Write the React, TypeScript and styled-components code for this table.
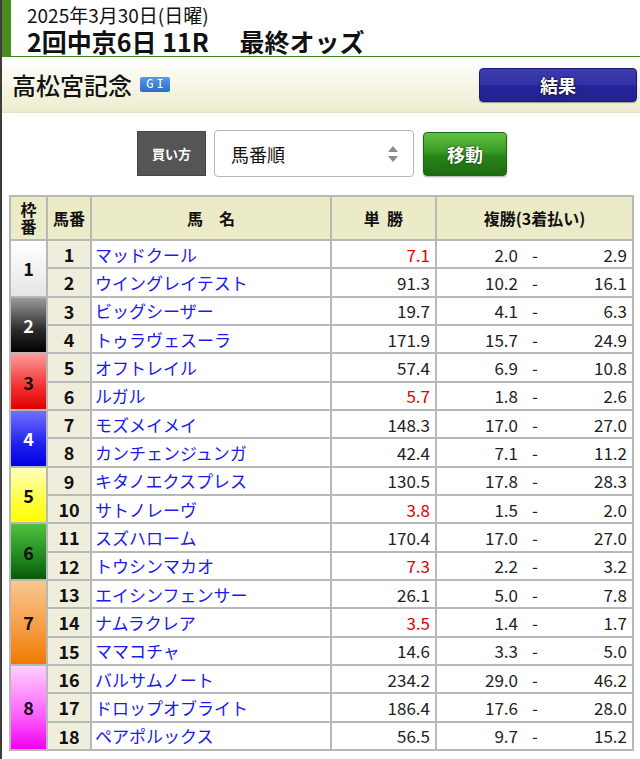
import React from 'react'
import styled, { createGlobalStyle } from 'styled-components'

const GlobalStyle = createGlobalStyle`
  body {
    margin: 0;
    background: #fff;
    font-family: 'Noto Sans CJK JP', 'Noto Sans', sans-serif;
    color: #111;
  }
`

type Horse = { no: number; name: string; win: string; low: string; high: string; fav?: boolean }

const FRAMES: { bg: string; color: string }[] = [
  { bg: 'linear-gradient(#ffffff, #e6e6e6)', color: '#111' },
  { bg: 'linear-gradient(#9a9a9a, #2a2a2a 60%, #000)', color: '#fff' },
  { bg: 'linear-gradient(#ff9a9a, #f03030 60%, #e00000)', color: '#111' },
  { bg: 'linear-gradient(#7070ff, #2020f0 60%, #0000e0)', color: '#fff' },
  { bg: 'linear-gradient(#ffffc0, #ffff40 60%, #ffff00)', color: '#111' },
  { bg: 'linear-gradient(#50c040, #1e8a1e 60%, #0b5a0b)', color: '#111' },
  { bg: 'linear-gradient(#f9c890, #f59a40 60%, #f07a00)', color: '#111' },
  { bg: 'linear-gradient(#ffd0ff, #ff60ff 60%, #f000f0)', color: '#111' },
]

const horses: Horse[] = [
  { no: 1, name: 'マッドクール', win: '7.1', low: '2.0', high: '2.9', fav: true },
  { no: 2, name: 'ウイングレイテスト', win: '91.3', low: '10.2', high: '16.1' },
  { no: 3, name: 'ビッグシーザー', win: '19.7', low: '4.1', high: '6.3' },
  { no: 4, name: 'トゥラヴェスーラ', win: '171.9', low: '15.7', high: '24.9' },
  { no: 5, name: 'オフトレイル', win: '57.4', low: '6.9', high: '10.8' },
  { no: 6, name: 'ルガル', win: '5.7', low: '1.8', high: '2.6', fav: true },
  { no: 7, name: 'モズメイメイ', win: '148.3', low: '17.0', high: '27.0' },
  { no: 8, name: 'カンチェンジュンガ', win: '42.4', low: '7.1', high: '11.2' },
  { no: 9, name: 'キタノエクスプレス', win: '130.5', low: '17.8', high: '28.3' },
  { no: 10, name: 'サトノレーヴ', win: '3.8', low: '1.5', high: '2.0', fav: true },
  { no: 11, name: 'スズハローム', win: '170.4', low: '17.0', high: '27.0' },
  { no: 12, name: 'トウシンマカオ', win: '7.3', low: '2.2', high: '3.2', fav: true },
  { no: 13, name: 'エイシンフェンサー', win: '26.1', low: '5.0', high: '7.8' },
  { no: 14, name: 'ナムラクレア', win: '3.5', low: '1.4', high: '1.7', fav: true },
  { no: 15, name: 'ママコチャ', win: '14.6', low: '3.3', high: '5.0' },
  { no: 16, name: 'バルサムノート', win: '234.2', low: '29.0', high: '46.2' },
  { no: 17, name: 'ドロップオブライト', win: '186.4', low: '17.6', high: '28.0' },
  { no: 18, name: 'ペアポルックス', win: '56.5', low: '9.7', high: '15.2' },
]

// 枠ごとの頭数 (18頭立て)
const frameSizes = [2, 2, 2, 2, 2, 2, 3, 3]

const Page = styled.div`
  border-left: 2px solid #3c3c3c;
  min-height: 759px;
  box-sizing: border-box;
`

const RaceHeader = styled.header`
  height: 57px;
  box-sizing: border-box;
  border-left: 9px solid #4a8c20;
  border-bottom: 1px solid #3a8a1c;
  padding: 2px 0 0 16px;
`

const DateLine = styled.div`
  font-size: 19px;
  line-height: 25px;
  color: #111;
`

const RaceName = styled.div`
  font-size: 25px;
  line-height: 28px;
  font-weight: bold;
  white-space: pre;
`

const TitleBand = styled.div`
  height: 56px;
  box-sizing: border-box;
  background: linear-gradient(#ffffff, #eeecce);
  border-bottom: 1px solid #e4e2c8;
  display: flex;
  align-items: center;
  justify-content: space-between;
  padding: 0 3px 0 10px;
`

const Title = styled.h1`
  margin: 0;
  font-size: 24px;
  font-weight: 500;
  display: flex;
  align-items: center;
  gap: 8px;
`

const GradeBadge = styled.span`
  display: inline-block;
  width: 30px;
  height: 15px;
  line-height: 15px;
  text-align: center;
  font-family: 'DejaVu Sans Mono', monospace;
  font-size: 12px;
  letter-spacing: 3px;
  text-indent: 3px;
  color: #fff;
  background: linear-gradient(#5a9ae6, #2c6cc4);
  border-radius: 2px;
`

const ResultButton = styled.button`
  width: 158px;
  height: 34px;
  border: 1px solid #1c1c78;
  border-radius: 4px;
  background: linear-gradient(#3c3cae 0%, #3232a6 48%, #25259a 52%, #21218f 100%);
  box-shadow: 0 1px 1px rgba(0, 0, 0, 0.35);
  color: #fff;
  font-family: inherit;
  font-size: 18px;
  font-weight: bold;
  text-shadow: 0 0 2px #000, 0 0 1px #000;
  padding: 0;
`

const Controls = styled.div`
  display: flex;
  justify-content: center;
  align-items: center;
  gap: 8px;
  margin: 17px 0 0 2px;
`

const BuyLabel = styled.div`
  width: 69px;
  height: 45px;
  box-sizing: border-box;
  background: #555;
  border: 1px solid #444;
  color: #fff;
  font-size: 13px;
  font-weight: bold;
  display: flex;
  align-items: center;
  justify-content: center;
`

const SelectBox = styled.div`
  width: 200px;
  height: 47px;
  box-sizing: border-box;
  border: 1px solid #b8b8b8;
  border-radius: 4px;
  background: #fff;
  display: flex;
  align-items: center;
  justify-content: space-between;
  padding: 0 14px 0 16px;
  font-size: 18px;
`

const MoveButton = styled.button`
  width: 84px;
  height: 44px;
  border: 1px solid #1c6a14;
  border-radius: 4px;
  background: linear-gradient(#62c040 0%, #3a9a24 45%, #2a8418 55%, #1d6a10 100%);
  box-shadow: 0 1px 2px rgba(0, 0, 0, 0.35);
  color: #fff;
  font-family: inherit;
  font-size: 18px;
  font-weight: bold;
  text-shadow: 0 0 2px #0a3a05, 0 0 1px #0a3a05;
  padding: 0;
  margin-left: 1px;
`

const OddsTable = styled.table`
  margin: 18px 0 0 7px;
  width: 625px;
  border-collapse: collapse;
  border: 2px solid #b0b0b0;
  table-layout: fixed;
`

const Th = styled.th`
  height: 42px;
  background: #ecebc8;
  border: 2px solid #b8b8b8;
  font-size: 16px;
  font-weight: bold;
  line-height: 1.05;
  padding: 0;
  white-space: pre;
`

const FrameCell = styled.td<{ $bg: string; $color: string }>`
  background: ${(p) => p.$bg};
  color: ${(p) => p.$color};
  border: 2px solid #b8b8b8;
  text-align: center;
  font-size: 18px;
  font-weight: bold;
  padding: 0;
`

const NoCell = styled.td`
  height: 26.33px;
  background: #efeddc;
  border: 2px solid #b8b8b8;
  text-align: center;
  font-size: 18px;
  font-weight: bold;
  padding: 0;
  line-height: 1;
`

const NameCell = styled.td`
  border: 2px solid #b8b8b8;
  color: #1a1aee;
  font-size: 17px;
  padding: 0 3px;
  white-space: nowrap;
  line-height: 1;
`

const WinCell = styled.td<{ $fav?: boolean }>`
  border: 2px solid #b8b8b8;
  color: ${(p) => (p.$fav ? '#e00000' : '#222')};
  font-size: 17px;
  text-align: right;
  padding: 0 5px 0 0;
  line-height: 1;
`

const PlaceCell = styled.td`
  border: 2px solid #b8b8b8;
  font-size: 17px;
  color: #222;
  padding: 0 5px 0 0;
  line-height: 1;
`

const PlaceRange = styled.div`
  display: grid;
  grid-template-columns: 81px 34px 1fr;
  align-items: center;
  & > span:first-child,
  & > span:last-child {
    text-align: right;
  }
  & > span:nth-child(2) {
    text-align: center;
  }
`

const SelectArrows = () => (
  <svg width="12" height="18" viewBox="0 0 12 18">
    <path d="M6 1 L11 7 H1 Z" fill="#8a8a8a" />
    <path d="M6 17 L11 11 H1 Z" fill="#8a8a8a" />
  </svg>
)

const App = () => {
  let idx = 0
  const rows: React.ReactNode[] = []
  frameSizes.forEach((size, f) => {
    for (let i = 0; i < size; i++) {
      const h = horses[idx++]
      rows.push(
        <tr key={h.no}>
          {i === 0 && (
            <FrameCell rowSpan={size} $bg={FRAMES[f].bg} $color={FRAMES[f].color}>
              {f + 1}
            </FrameCell>
          )}
          <NoCell>{h.no}</NoCell>
          <NameCell>{h.name}</NameCell>
          <WinCell $fav={h.fav}>{h.win}</WinCell>
          <PlaceCell>
            <PlaceRange>
              <span>{h.low}</span>
              <span>-</span>
              <span>{h.high}</span>
            </PlaceRange>
          </PlaceCell>
        </tr>,
      )
    }
  })

  return (
    <Page>
      <GlobalStyle />
      <RaceHeader>
        <DateLine>2025年3月30日(日曜)</DateLine>
        <RaceName>{'2回中京6日 11R　 最終オッズ'}</RaceName>
      </RaceHeader>
      <TitleBand>
        <Title>
          高松宮記念
          <GradeBadge>GI</GradeBadge>
        </Title>
        <ResultButton>結果</ResultButton>
      </TitleBand>
      <Controls>
        <BuyLabel>買い方</BuyLabel>
        <SelectBox>
          <span>馬番順</span>
          <SelectArrows />
        </SelectBox>
        <MoveButton>移動</MoveButton>
      </Controls>
      <OddsTable>
        <colgroup>
          <col style={{ width: 37 }} />
          <col style={{ width: 44 }} />
          <col style={{ width: 240 }} />
          <col style={{ width: 105 }} />
          <col />
        </colgroup>
        <thead>
          <tr>
            <Th>{'枠\n番'}</Th>
            <Th>馬番</Th>
            <Th>{'馬　名'}</Th>
            <Th>{'単  勝'}</Th>
            <Th>複勝(3着払い)</Th>
          </tr>
        </thead>
        <tbody>{rows}</tbody>
      </OddsTable>
    </Page>
  )
}

export default App
